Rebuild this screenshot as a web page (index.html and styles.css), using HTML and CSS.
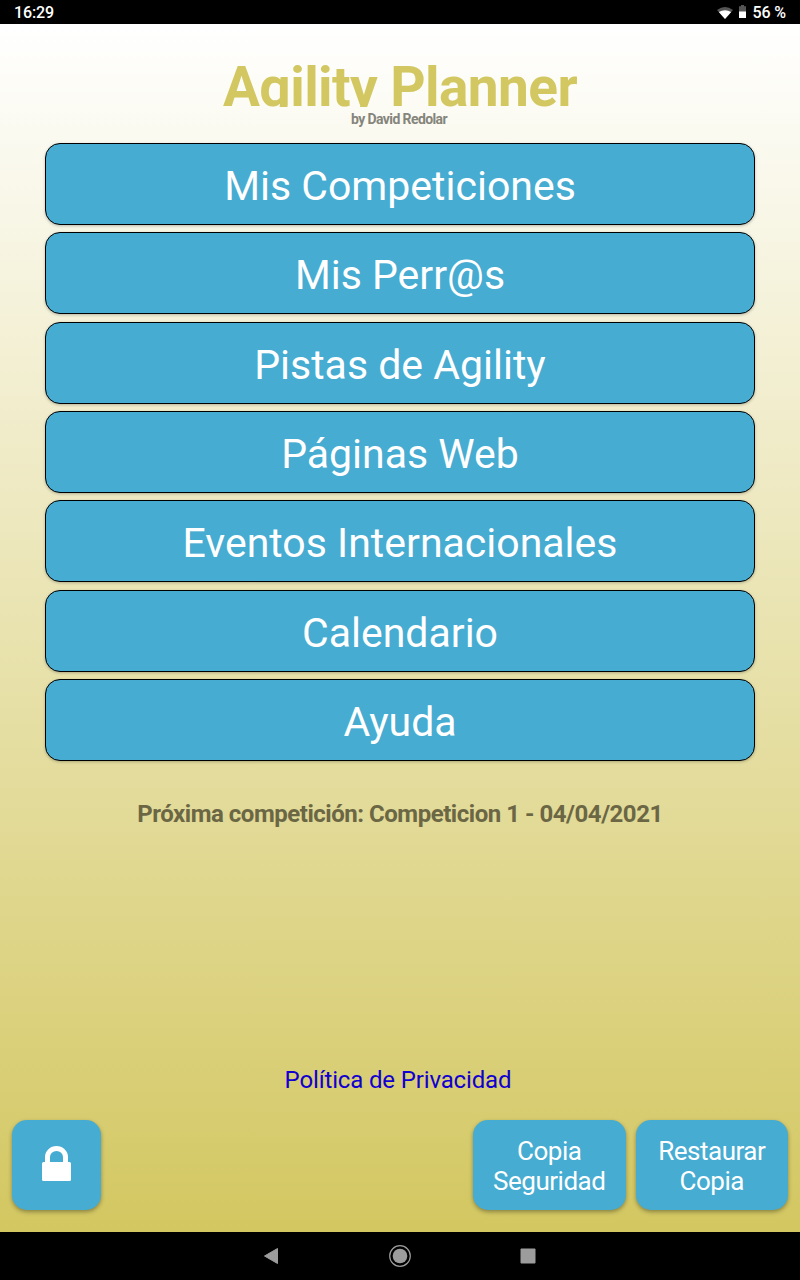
FILE: index.html
```html
<!DOCTYPE html>
<html lang="es">
<head>
    <meta charset="UTF-8">
    <meta name="viewport" content="width=device-width, initial-scale=1.0">
    <title>Agility Planner</title>
    <link rel="stylesheet" href="styles.css">
</head>
<body>

<div class="barra-estado">
    <span class="hora">16:29</span>
    <svg class="wifi" width="16" height="12" viewBox="0 0 16 12">
        <path d="M0 3 Q8 -3 16 3 L8 12 Z" fill="#555"/>
        <path d="M1.8 5 Q8 1.4 14.2 5 L8 12 Z" fill="#fff"/>
    </svg>
    <svg class="bateria" width="7" height="13" viewBox="0 0 7 13">
        <path d="M2 0 H5 V1.3 H7 V13 H0 V1.3 H2 Z" fill="#555"/>
        <rect x="0" y="6.5" width="7" height="6.5" fill="#fff"/>
    </svg>
    <span>56 %</span>
</div>

<main class="pantalla">
    <h1 class="titulo">Agility Planner</h1>
    <p class="autor">by David Redolar</p>

    <nav class="menu">
        <button type="button" class="boton">Mis Competiciones</button>
        <button type="button" class="boton">Mis Perr@s</button>
        <button type="button" class="boton">Pistas de Agility</button>
        <button type="button" class="boton">Páginas Web</button>
        <button type="button" class="boton">Eventos Internacionales</button>
        <button type="button" class="boton">Calendario</button>
        <button type="button" class="boton">Ayuda</button>
    </nav>

    <p class="proxima">Próxima competición: Competicion 1 - 04/04/2021</p>

    <a class="privacidad" href="#">Política de Privacidad</a>

    <div class="acciones">
        <button type="button" class="accion candado" aria-label="Bloquear">
            <svg width="29" height="35" viewBox="0 0 29 35">
                <path d="M5.5 18 V11 A9 8.5 0 0 1 23.5 11 V18" fill="none" stroke="#fff" stroke-width="5"/>
                <rect x="0" y="16" width="29" height="19" rx="1.5" fill="#fff"/>
            </svg>
        </button>
        <button type="button" class="accion">Copia<br>Seguridad</button>
        <button type="button" class="accion">Restaurar<br>Copia</button>
    </div>
</main>

<div class="barra-nav">
    <svg width="16" height="18" viewBox="0 0 16 18">
        <path d="M0.5 9 L13.5 1.5 V16.5 Z" fill="#9c9c9c" stroke="#9c9c9c" stroke-linejoin="round"/>
    </svg>
    <svg width="22" height="22" viewBox="0 0 22 22">
        <circle cx="11" cy="11" r="10.3" fill="none" stroke="#9c9c9c" stroke-width="1.2"/>
        <circle cx="11" cy="11" r="7.3" fill="#9c9c9c"/>
    </svg>
    <svg width="16" height="16" viewBox="0 0 16 16">
        <rect x="0.5" y="0.5" width="15" height="15" rx="1" fill="#9c9c9c"/>
    </svg>
</div>

</body>
</html>
```
FILE: styles.css
```css
* {
    box-sizing: border-box;
}

body {
    margin: 0;
    height: 1280px;
    display: flex;
    flex-direction: column;
    font-family: Roboto, "Liberation Sans", sans-serif;
    background-color: black;
}

/* barra superior */
.barra-estado {
    height: 24px;
    padding: 1px 14px 0;
    display: flex;
    align-items: center;
    color: white;
    font-size: 16px;
    font-weight: 500;
    line-height: 24px;
    letter-spacing: -0.1px;
}

.hora {
    margin-right: auto;
}

.wifi {
    margin-right: 6px;
}

.bateria {
    margin: 0 6px 3px 0;
}

.pantalla {
    height: 1208px;
    padding: 36px 12px 22px;
    display: flex;
    flex-direction: column;
    align-items: center;
    background: linear-gradient(white, #d3c761);
}

/* la altura fija recorta la parte baja de las letras */
.titulo {
    margin: 0;
    height: 47px;
    overflow: hidden;
    color: #d3c761;
    font-size: 55px;
    font-weight: bold;
    line-height: 54px;
    letter-spacing: -0.6px;
    white-space: nowrap;
}

.autor {
    margin: 4px 2px 0 0;
    color: #85857c;
    font-size: 14px;
    font-weight: bold;
    line-height: 16px;
    letter-spacing: -0.6px;
}

.menu {
    width: 710px;
    margin-top: 16px;
    display: flex;
    flex-direction: column;
    gap: 7.33px;
}

.boton {
    height: 82px;
    padding: 4px 0 0;
    border: 1px solid black;
    border-radius: 15px;
    background-color: #46acd1;
    box-shadow: 0 1px 3px rgba(0, 0, 0, 0.25);
    color: white;
    font-family: inherit;
    font-size: 41px;
}

.proxima {
    margin: 38px 0 0;
    color: #6b6745;
    font-size: 24px;
    font-weight: bold;
    line-height: 30px;
    letter-spacing: -0.47px;
}

.privacidad {
    margin: auto 4px 25px 0;
    color: #1100d0;
    font-size: 24px;
    line-height: 30px;
    letter-spacing: -0.15px;
    text-decoration: none;
}

.acciones {
    width: 100%;
    display: flex;
    gap: 10px;
}

.accion {
    width: 152.5px;
    height: 90px;
    padding: 2px 0 0;
    border: none;
    border-radius: 15px;
    background-color: #46acd1;
    box-shadow: 0 2px 4px rgba(0, 0, 0, 0.35);
    color: white;
    font-family: inherit;
    font-size: 26px;
    line-height: 30px;
    letter-spacing: -0.5px;
}

.candado {
    width: 89px;
    margin-right: auto;
    display: flex;
    align-items: center;
    justify-content: center;
    padding: 0 0 3px;
}

/* barra inferior */
.barra-nav {
    height: 48px;
    display: flex;
    align-items: center;
    justify-content: center;
    gap: 109px;
}
```
